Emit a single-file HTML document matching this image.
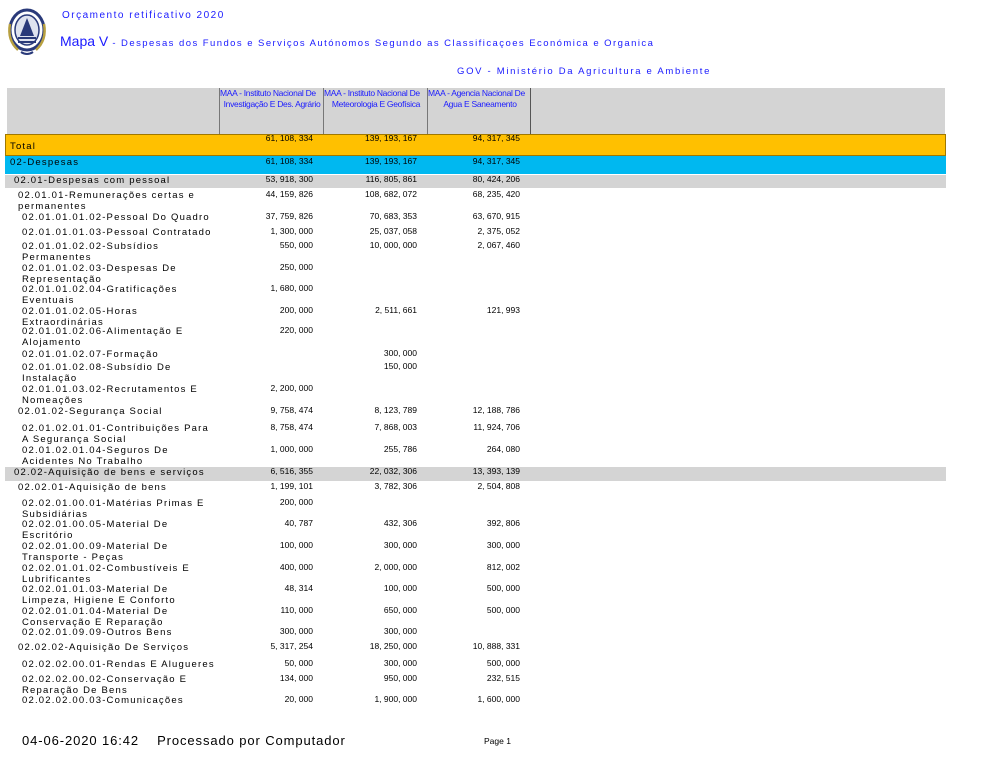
<!DOCTYPE html>
<html><head><meta charset="utf-8"><style>
body{margin:0;width:1000px;height:773px;background:#fff;position:relative;overflow:hidden;font-family:"Liberation Sans",sans-serif;color:#000}
.a{position:absolute;white-space:nowrap}
.t{font-size:9.5px;letter-spacing:1.2px;line-height:11px}
.n{position:absolute;font-size:8.5px;text-align:right;width:100px;line-height:11px}
.c1{left:213px}.c2{left:317px}.c3{left:420px}
.blue{color:#1a1aff}
.h{position:absolute;white-space:nowrap;width:104px;font-size:8.5px;line-height:11px;letter-spacing:-0.3px;top:88px;color:#1a1aff}
.h div{text-align:center}
</style></head><body>
<svg class="a" style="left:4px;top:6px" width="46" height="52" viewBox="0 0 46 52">
<ellipse cx="23" cy="24" rx="17" ry="20" fill="#fff" stroke="#2a3a7a" stroke-width="3"/>
<ellipse cx="23" cy="24" rx="12" ry="15" fill="#dfe3ef" stroke="#2a3a7a" stroke-width="1.5"/>
<path d="M23 12 L30 30 L16 30 Z" fill="#2a3a7a"/>
<rect x="14" y="31" width="18" height="2" fill="#2a3a7a"/><rect x="14" y="35" width="18" height="2" fill="#2a3a7a"/>
<path d="M6 18 Q3 34 14 44 M40 18 Q43 34 32 44" stroke="#b8a040" stroke-width="2.5" fill="none"/>
<path d="M17 46 Q23 50 29 46" stroke="#2a3a7a" stroke-width="2" fill="none"/>
</svg>
<div class="a blue" style="left:62px;top:10px;font-size:10px;letter-spacing:1.5px">Orçamento retificativo 2020</div>
<div class="a blue" style="left:60px;top:33px;font-size:14px">Mapa V<span style="font-size:9.5px;letter-spacing:1.45px"> - Despesas dos Fundos e Serviços Autónomos Segundo as Classificaçoes Económica e Organica</span></div>
<div class="a blue" style="left:457px;top:66px;font-size:9.5px;letter-spacing:1.7px">GOV - Ministério Da Agricultura e Ambiente</div>

<div class="a" style="left:7px;top:88px;width:938px;height:46px;background:#d4d4d4"></div>
<div class="a" style="left:219px;top:88px;width:1px;height:46px;background:#777"></div>
<div class="a" style="left:323px;top:88px;width:1px;height:46px;background:#777"></div>
<div class="a" style="left:427px;top:88px;width:1px;height:46px;background:#777"></div>
<div class="a" style="left:530px;top:88px;width:1px;height:46px;background:#555"></div>
<div class="h" style="left:220px">MAA - Instituto Nacional De<div>Investigação E Des. Agrário</div></div>
<div class="h" style="left:324px">MAA - Instituto Nacional De<div>Meteorologia E Geofísica</div></div>
<div class="h" style="left:428px">MAA - Agencia Nacional De<div>Agua E Saneamento</div></div>

<div class="a" style="left:5px;top:134px;width:939px;height:20px;background:#ffc000;border:1px solid #a07800"></div>
<div class="a" style="left:5px;top:156px;width:941px;height:18px;background:#00b8f0"></div>
<div class="a" style="left:5px;top:175px;width:941px;height:13px;background:#d4d4d4"></div>
<div class="a" style="left:5px;top:467px;width:941px;height:14px;background:#d4d4d4"></div>

<div class="a t" style="left:10px;top:141px">Total</div>
<div class="n c1" style="top:133px">61, 108, 334</div><div class="n c2" style="top:133px">139, 193, 167</div><div class="n c3" style="top:133px">94, 317, 345</div>
<div class="a t" style="left:10px;top:157px">02-Despesas</div>
<div class="n c1" style="top:156px">61, 108, 334</div><div class="n c2" style="top:156px">139, 193, 167</div><div class="n c3" style="top:156px">94, 317, 345</div>
<div class="a t" style="left:14px;top:175px">02.01-Despesas com pessoal</div>
<div class="n c1" style="top:174px">53, 918, 300</div><div class="n c2" style="top:174px">116, 805, 861</div><div class="n c3" style="top:174px">80, 424, 206</div>

<div class="a t" style="left:18px;top:190px">02.01.01-Remunerações certas e<br>permanentes</div>
<div class="n c1" style="top:189px">44, 159, 826</div><div class="n c2" style="top:189px">108, 682, 072</div><div class="n c3" style="top:189px">68, 235, 420</div>
<div class="a t" style="left:22px;top:212px">02.01.01.01.02-Pessoal Do Quadro</div>
<div class="n c1" style="top:211px">37, 759, 826</div><div class="n c2" style="top:211px">70, 683, 353</div><div class="n c3" style="top:211px">63, 670, 915</div>
<div class="a t" style="left:22px;top:227px">02.01.01.01.03-Pessoal Contratado</div>
<div class="n c1" style="top:226px">1, 300, 000</div><div class="n c2" style="top:226px">25, 037, 058</div><div class="n c3" style="top:226px">2, 375, 052</div>
<div class="a t" style="left:22px;top:241px">02.01.01.02.02-Subsídios<br>Permanentes</div>
<div class="n c1" style="top:240px">550, 000</div><div class="n c2" style="top:240px">10, 000, 000</div><div class="n c3" style="top:240px">2, 067, 460</div>
<div class="a t" style="left:22px;top:263px">02.01.01.02.03-Despesas De<br>Representação</div>
<div class="n c1" style="top:262px">250, 000</div>
<div class="a t" style="left:22px;top:284px">02.01.01.02.04-Gratificações<br>Eventuais</div>
<div class="n c1" style="top:283px">1, 680, 000</div>
<div class="a t" style="left:22px;top:306px">02.01.01.02.05-Horas<br>Extraordinárias</div>
<div class="n c1" style="top:305px">200, 000</div><div class="n c2" style="top:305px">2, 511, 661</div><div class="n c3" style="top:305px">121, 993</div>
<div class="a t" style="left:22px;top:326px">02.01.01.02.06-Alimentação E<br>Alojamento</div>
<div class="n c1" style="top:325px">220, 000</div>
<div class="a t" style="left:22px;top:349px">02.01.01.02.07-Formação</div>
<div class="n c2" style="top:348px">300, 000</div>
<div class="a t" style="left:22px;top:362px">02.01.01.02.08-Subsídio De<br>Instalação</div>
<div class="n c2" style="top:361px">150, 000</div>
<div class="a t" style="left:22px;top:384px">02.01.01.03.02-Recrutamentos E<br>Nomeações</div>
<div class="n c1" style="top:383px">2, 200, 000</div>
<div class="a t" style="left:18px;top:406px">02.01.02-Segurança Social</div>
<div class="n c1" style="top:405px">9, 758, 474</div><div class="n c2" style="top:405px">8, 123, 789</div><div class="n c3" style="top:405px">12, 188, 786</div>
<div class="a t" style="left:22px;top:423px">02.01.02.01.01-Contribuições Para<br>A Segurança Social</div>
<div class="n c1" style="top:422px">8, 758, 474</div><div class="n c2" style="top:422px">7, 868, 003</div><div class="n c3" style="top:422px">11, 924, 706</div>
<div class="a t" style="left:22px;top:445px">02.01.02.01.04-Seguros De<br>Acidentes No Trabalho</div>
<div class="n c1" style="top:444px">1, 000, 000</div><div class="n c2" style="top:444px">255, 786</div><div class="n c3" style="top:444px">264, 080</div>

<div class="a t" style="left:14px;top:467px">02.02-Aquisição de bens e serviços</div>
<div class="n c1" style="top:466px">6, 516, 355</div><div class="n c2" style="top:466px">22, 032, 306</div><div class="n c3" style="top:466px">13, 393, 139</div>
<div class="a t" style="left:18px;top:482px">02.02.01-Aquisição de bens</div>
<div class="n c1" style="top:481px">1, 199, 101</div><div class="n c2" style="top:481px">3, 782, 306</div><div class="n c3" style="top:481px">2, 504, 808</div>
<div class="a t" style="left:22px;top:498px">02.02.01.00.01-Matérias Primas E<br>Subsidiárias</div>
<div class="n c1" style="top:497px">200, 000</div>
<div class="a t" style="left:22px;top:519px">02.02.01.00.05-Material De<br>Escritório</div>
<div class="n c1" style="top:518px">40, 787</div><div class="n c2" style="top:518px">432, 306</div><div class="n c3" style="top:518px">392, 806</div>
<div class="a t" style="left:22px;top:541px">02.02.01.00.09-Material De<br>Transporte - Peças</div>
<div class="n c1" style="top:540px">100, 000</div><div class="n c2" style="top:540px">300, 000</div><div class="n c3" style="top:540px">300, 000</div>
<div class="a t" style="left:22px;top:563px">02.02.01.01.02-Combustíveis E<br>Lubrificantes</div>
<div class="n c1" style="top:562px">400, 000</div><div class="n c2" style="top:562px">2, 000, 000</div><div class="n c3" style="top:562px">812, 002</div>
<div class="a t" style="left:22px;top:584px">02.02.01.01.03-Material De<br>Limpeza, Higiene E Conforto</div>
<div class="n c1" style="top:583px">48, 314</div><div class="n c2" style="top:583px">100, 000</div><div class="n c3" style="top:583px">500, 000</div>
<div class="a t" style="left:22px;top:606px">02.02.01.01.04-Material De<br>Conservação E Reparação</div>
<div class="n c1" style="top:605px">110, 000</div><div class="n c2" style="top:605px">650, 000</div><div class="n c3" style="top:605px">500, 000</div>
<div class="a t" style="left:22px;top:627px">02.02.01.09.09-Outros Bens</div>
<div class="n c1" style="top:626px">300, 000</div><div class="n c2" style="top:626px">300, 000</div>
<div class="a t" style="left:18px;top:642px">02.02.02-Aquisição De Serviços</div>
<div class="n c1" style="top:641px">5, 317, 254</div><div class="n c2" style="top:641px">18, 250, 000</div><div class="n c3" style="top:641px">10, 888, 331</div>
<div class="a t" style="left:22px;top:659px">02.02.02.00.01-Rendas E Alugueres</div>
<div class="n c1" style="top:658px">50, 000</div><div class="n c2" style="top:658px">300, 000</div><div class="n c3" style="top:658px">500, 000</div>
<div class="a t" style="left:22px;top:674px">02.02.02.00.02-Conservação E<br>Reparação De Bens</div>
<div class="n c1" style="top:673px">134, 000</div><div class="n c2" style="top:673px">950, 000</div><div class="n c3" style="top:673px">232, 515</div>
<div class="a t" style="left:22px;top:695px">02.02.02.00.03-Comunicações</div>
<div class="n c1" style="top:694px">20, 000</div><div class="n c2" style="top:694px">1, 900, 000</div><div class="n c3" style="top:694px">1, 600, 000</div>

<div class="a" style="left:22px;top:733px;font-size:13px;letter-spacing:0.9px">04-06-2020 16:42 &nbsp;&nbsp; Processado por Computador</div>
<div class="a" style="left:484px;top:736px;font-size:8.5px">Page 1</div>
</body></html>
